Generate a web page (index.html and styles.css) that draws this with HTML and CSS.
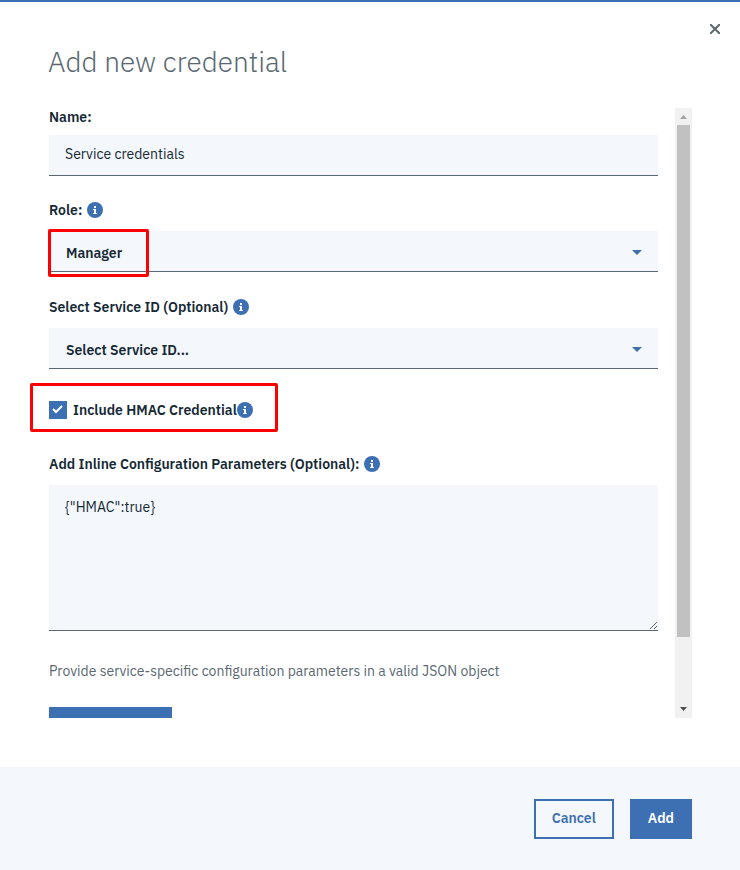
FILE: index.html
```html
<!DOCTYPE html>
<html lang="en">
<head>
    <meta charset="UTF-8">
    <meta name="viewport" content="width=device-width, initial-scale=1.0">
    <title>Add new credential</title>
    <link rel="stylesheet" href="styles.css">
</head>
<body>
    <!-- Shared icons -->
    <svg class="icon-sprite" aria-hidden="true">
        <symbol id="icon-info" viewBox="0 0 16 16">
            <circle cx="8" cy="8" r="8" fill="#3d70b2"/>
            <path d="M7 4h2v2H7zM6 7h3v4h1v1H6v-1h1V8H6z" fill="#fff"/>
        </symbol>
        <symbol id="icon-caret" viewBox="0 0 10 5">
            <path d="M0 0h10L5 5z" fill="#3d70b2"/>
        </symbol>
    </svg>

    <div class="modal" role="dialog" aria-labelledby="modalTitle">
        <header class="modal-header">
            <h1 class="modal-title" id="modalTitle">Add new credential</h1>
            <button class="modal-close" type="button" aria-label="Close">
                <svg width="10" height="10" viewBox="0 0 10 10">
                    <path d="M0 0l10 10M10 0L0 10" fill="none" stroke="#5a6872" stroke-width="2"/>
                </svg>
            </button>
        </header>

        <div class="modal-body">
            <form class="modal-form" id="credentialForm">
                <div class="field field-name">
                    <div class="field-label">
                        <label for="name">Name:</label>
                    </div>
                    <input class="field-control" id="name" type="text" value="Service credentials">
                </div>

                <div class="field">
                    <div class="field-label">
                        <label for="role">Role:</label>
                        <svg class="icon-info"><use href="#icon-info"/></svg>
                    </div>
                    <div class="select-wrap">
                        <select class="field-control" id="role">
                            <option>Manager</option>
                        </select>
                        <svg class="icon-caret"><use href="#icon-caret"/></svg>
                        <span class="highlight highlight-role"></span>
                    </div>
                </div>

                <div class="field">
                    <div class="field-label">
                        <label for="serviceId">Select Service ID (Optional)</label>
                        <svg class="icon-info"><use href="#icon-info"/></svg>
                    </div>
                    <div class="select-wrap">
                        <select class="field-control" id="serviceId">
                            <option>Select Service ID...</option>
                        </select>
                        <svg class="icon-caret"><use href="#icon-caret"/></svg>
                    </div>
                </div>

                <div class="checkbox-row">
                    <input class="checkbox" id="hmac" type="checkbox" checked>
                    <label for="hmac">Include HMAC Credential</label>
                    <svg class="icon-info"><use href="#icon-info"/></svg>
                    <span class="highlight highlight-hmac"></span>
                </div>

                <div class="field">
                    <div class="field-label">
                        <label for="params">Add Inline Configuration Parameters (Optional):</label>
                        <svg class="icon-info"><use href="#icon-info"/></svg>
                    </div>
                    <textarea class="field-control" id="params" spellcheck="false">{"HMAC":true}</textarea>
                </div>

                <p class="help-text">Provide service-specific configuration parameters in a valid JSON object</p>
                <button class="btn btn-primary btn-file" type="button" aria-label="Choose file"></button>
            </form>

            <div class="scrollbar" aria-hidden="true">
                <svg class="scrollbar-arrow" viewBox="0 0 17 17">
                    <path d="M5 11h7L8.5 7z" fill="#a3a3a3"/>
                </svg>
                <div class="scrollbar-thumb"></div>
                <div class="scrollbar-rest"></div>
                <svg class="scrollbar-arrow" viewBox="0 0 17 17">
                    <path d="M5 6h7L8.5 10z" fill="#505050"/>
                </svg>
            </div>
        </div>

        <footer class="modal-footer">
            <button class="btn btn-secondary" type="button">Cancel</button>
            <button class="btn btn-primary" type="submit" form="credentialForm">Add</button>
        </footer>
    </div>
</body>
</html>
```

FILE: styles.css
```css
* {
    margin: 0;
    padding: 0;
    box-sizing: border-box;
}

body {
    font-family: "IBM Plex Sans", Inter, "Liberation Sans", sans-serif;
    font-size: 14px;
    line-height: 18px;
    color: #152935;
    background: #fff;
}

button,
input,
select,
textarea {
    font: inherit;
    color: inherit;
}

.icon-sprite {
    display: none;
}

.modal {
    display: flex;
    flex-direction: column;
    height: 100vh;
    border-top: 2px solid #3d70b2;
}

/* Header */
.modal-header {
    display: flex;
    justify-content: space-between;
    align-items: flex-start;
    padding: 16px 14px 28px 48px;
}

.modal-title {
    margin-top: 26px;
    font-size: 28px;
    font-weight: 300;
    line-height: 36px;
    color: #5a6872;
}

.modal-close {
    display: flex;
    padding: 6px;
    border: none;
    background: none;
    cursor: pointer;
}

/* Body */
.modal-body {
    display: flex;
    flex: 1;
    min-height: 0;
    padding-right: 48px;
    margin-bottom: 49px;
}

.modal-form {
    flex: 1;
    overflow-y: auto;
    scrollbar-width: none;
    padding: 0 17px 40px 49px;
}

.field {
    margin-bottom: 26px;
}

.field-label {
    display: flex;
    align-items: center;
    gap: 5px;
    height: 18px;
    margin-bottom: 12px;
    font-weight: 600;
}

.field-name {
    margin-bottom: 25px;
}

.field-name .field-label {
    margin-bottom: 9px;
}

.field-control {
    display: block;
    width: 100%;
    height: 41px;
    padding: 0 16px 2px;
    border: none;
    border-bottom: 1px solid #5a6872;
    border-radius: 0;
    outline: none;
    background: #f4f7fb;
}

select.field-control {
    appearance: none;
    padding: 4px 17px 0;
    font-weight: 600;
}

textarea.field-control {
    height: 146px;
    padding-top: 13px;
    resize: vertical;
}

.select-wrap,
.checkbox-row {
    position: relative;
}

.icon-info {
    flex: none;
    width: 16px;
    height: 16px;
}

.icon-caret {
    position: absolute;
    top: 19px;
    right: 16px;
    width: 10px;
    height: 5px;
    pointer-events: none;
}

.checkbox-row {
    display: flex;
    align-items: center;
    height: 18px;
    margin: 32px 0 36px;
    font-weight: 600;
}

.checkbox {
    appearance: none;
    width: 18px;
    height: 18px;
    margin-right: 6px;
    background: #3d70b2;
}

.checkbox:checked {
    background: #3d70b2 url("data:image/svg+xml,%3Csvg xmlns='http://www.w3.org/2000/svg' viewBox='0 0 18 18'%3E%3Cpath d='M4 8l3 3 6-6' fill='none' stroke='white' stroke-width='2'/%3E%3C/svg%3E");
}

/* Red call-out frames */
.highlight {
    position: absolute;
    border: 3px solid #f00;
    border-radius: 2px;
    pointer-events: none;
}

.highlight-role {
    top: -2px;
    left: -1px;
    width: 101px;
    height: 48px;
}

.highlight-hmac {
    top: -18px;
    left: -19px;
    width: 248px;
    height: 49px;
}

.help-text {
    margin: 31px 0 27px;
    color: #5a6872;
}

/* Scrollbar */
.scrollbar {
    display: flex;
    flex-direction: column;
    width: 17px;
    background: #f1f1f1;
}

.scrollbar-arrow {
    flex: none;
    width: 17px;
    height: 17px;
}

.scrollbar-thumb {
    flex: 8;
    margin: 0 2px;
    background: #c1c1c1;
}

.scrollbar-rest {
    flex: 1;
}

/* Footer */
.modal-footer {
    display: flex;
    justify-content: flex-end;
    gap: 16px;
    padding: 32px 48px 31px;
    background: #f4f7fb;
}

.btn {
    height: 40px;
    padding: 0 16px 2px;
    border: 2px solid #3d70b2;
    font-weight: 600;
    cursor: pointer;
}

.btn-primary {
    background: #3d70b2;
    color: #fff;
}

.btn-secondary {
    background: transparent;
    color: #3d70b2;
}

.btn-file {
    width: 123px;
}
```
